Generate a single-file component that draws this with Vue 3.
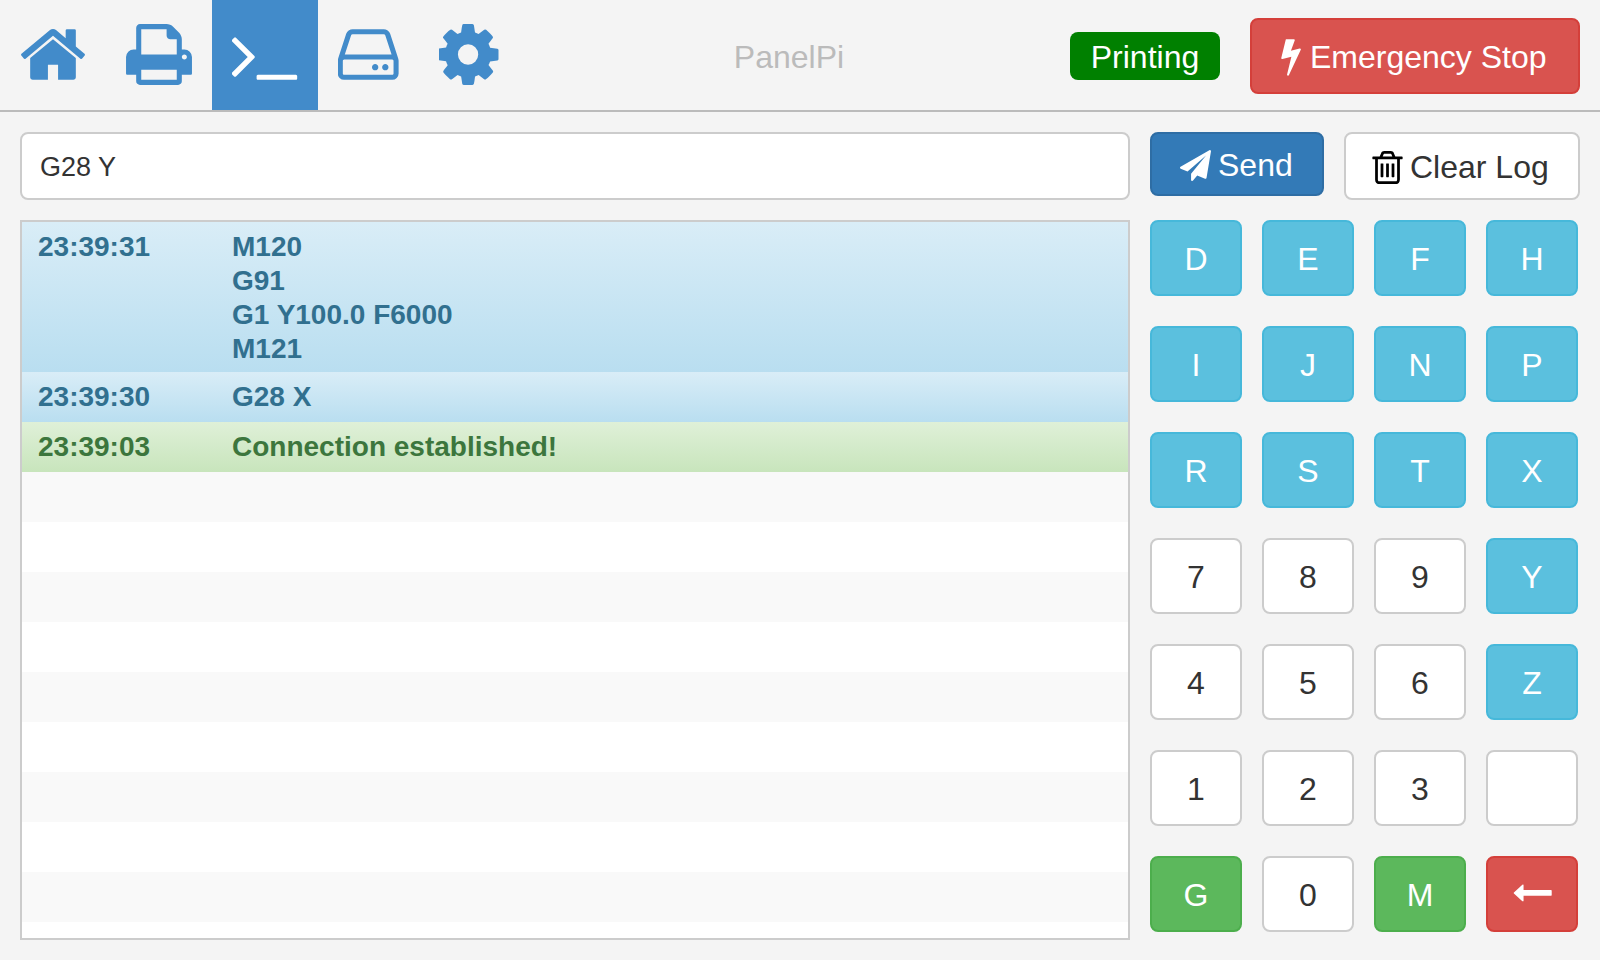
<script setup>
const icons = {
  home: { box: '64 0 1664 1792', d: 'M1472 992v480q0 26-19 45t-45 19h-384v-384h-256v384h-384q-26 0-45-19t-19-45v-480q0-1 .5-3t.5-3l575-474 575 474q1 2 1 6zm223-69l-62 74q-8 9-21 11h-3q-13 0-21-7l-692-577-692 577q-12 8-24 7-13-2-21-11l-62-74q-8-10-7-23.5t11-21.5l719-599q32-26 76-26t76 26l244 204v-195q0-14 9-23t23-9h192q14 0 23 9t9 23v408l219 182q10 8 11 21.5t-7 23.5z' },
  print: { box: '64 0 1664 1792', d: 'M448 1536h896v-256h-896v256zm0-640h896v-384h-160q-40 0-68-28t-28-68v-160h-640v640zm1152 64q0-26-19-45t-45-19-45 19-19 45 19 45 45 19 45-19 19-45zm128 0v416q0 13-9.5 22.5t-22.5 9.5h-224v160q0 40-28 68t-68 28h-960q-40 0-68-28t-28-68v-160h-224q-13 0-22.5-9.5t-9.5-22.5v-416q0-79 56.5-135.5t135.5-56.5h64v-544q0-40 28-68t68-28h672q40 0 88 20t76 48l152 152q28 28 48 76t20 88v256h64q79 0 135.5 56.5t56.5 135.5z' },
  terminal: { box: '20 0 1664 1792', d: 'M585 983l-466 466q-10 10-23 10t-23-10l-50-50q-10-10-10-23t10-23l393-393-393-393q-10-10-10-23t10-23l50-50q10-10 23-10t23 10l466 466q10 10 10 23t-10 23zm1079 457v64q0 14-9 23t-23 9h-960q-14 0-23-9t-9-23v-64q0-14 9-23t23-9h960q14 0 23 9t9 23z' },
  hdd: { box: '24 0 1536 1792', d: 'M1040 1216q0 33-23.5 56.5t-56.5 23.5-56.5-23.5-23.5-56.5 23.5-56.5 56.5-23.5 56.5 23.5 23.5 56.5zm256 0q0 33-23.5 56.5t-56.5 23.5-56.5-23.5-23.5-56.5 23.5-56.5 56.5-23.5 56.5 23.5 23.5 56.5zm128 160v-320q0-13-9.5-22.5t-22.5-9.5h-1216q-13 0-22.5 9.5t-9.5 22.5v320q0 13 9.5 22.5t22.5 9.5h1216q13 0 22.5-9.5t9.5-22.5zm-1230-480h1180l-157-482q-4-13-16-21.5t-26-8.5h-782q-14 0-26 8.5t-16 21.5zm1358 160v320q0 66-47 113t-113 47h-1216q-66 0-113-47t-47-113v-320q0-25 16-75l197-606q17-53 63-86t101-33h782q55 0 101 33t63 86l197 606q16 50 16 75z' },
  cog: { box: '164 0 1536 1792', d: 'M1152 896q0-106-75-181t-181-75-181 75-75 181 75 181 181 75 181-75 75-181zm512-109v222q0 12-8 23t-20 13l-185 28q-19 54-39 91 35 50 107 138 10 12 10 25t-9 23q-27 37-99 108t-94 71q-12 0-26-9l-138-108q-44 23-91 38-16 136-29 186-7 28-36 28h-222q-14 0-24.5-8.5t-11.5-21.5l-28-184q-49-16-90-37l-141 107q-10 9-25 9-14 0-25-11-126-114-165-168-7-10-7-23 0-12 8-23 15-21 51-66.5t54-70.5q-27-50-41-99l-183-27q-13-2-21-12.5t-8-23.5v-222q0-12 8-23t19-13l186-28q14-46 39-92-40-57-107-138-10-12-10-24 0-10 9-23 26-36 98.5-107.5t94.5-71.5q13 0 26 10l138 107q44-23 91-38 16-136 29-186 7-28 36-28h222q14 0 24.5 8.5t11.5 21.5l28 184q49 16 90 37l142-107q9-9 24-9 13 0 25 10 129 119 165 170 7 8 7 22 0 12-8 23-15 21-51 66.5t-54 70.5q26 50 41 98l183 28q13 2 21 12.5t8 23.5z' }
}
const tabs = [
  { id: 'home', w: 66 },
  { id: 'print', w: 66 },
  { id: 'terminal', w: 66, active: true },
  { id: 'hdd', w: 61 },
  { id: 'cog', w: 61 }
]
const bolt = 'M1333 566q18 20 7 44l-540 1157q-13 25-42 25-4 0-14-2-17-5-25.5-19t-4.5-30l197-808-406 101q-4 1-12 1-18 0-31-11-18-15-13-39l201-825q4-14 16-23t28-9h328q19 0 32 12.5t13 29.5q0 8-5 18l-171 463 396-98q8-2 12-2 19 0 34 15z'
const plane = 'M1764 11q33 24 27 64l-256 1536q-5 29-32 45-14 8-31 8-11 0-24-5l-453-185-242 295q-18 23-49 23-13 0-22-4-19-7-30.5-23.5t-11.5-36.5v-349l864-1059-1069 925-395-162q-37-14-40-55-2-40 32-59l1664-960q15-9 32-9 20 0 36 11z'
const trash = 'M704 736v576q0 14-9 23t-23 9h-64q-14 0-23-9t-9-23v-576q0-14 9-23t23-9h64q14 0 23 9t9 23zm256 0v576q0 14-9 23t-23 9h-64q-14 0-23-9t-9-23v-576q0-14 9-23t23-9h64q14 0 23 9t9 23zm256 0v576q0 14-9 23t-23 9h-64q-14 0-23-9t-9-23v-576q0-14 9-23t23-9h64q14 0 23 9t9 23zm128 724v-948h-896v948q0 22 7 40.5t14.5 27 10.5 8.5h832q3 0 10.5-8.5t14.5-27 7-40.5zm-672-1076h448l-48-117q-7-9-17-11h-317q-10 2-17 11zm928 32v64q0 14-9 23t-23 9h-96v948q0 83-47 143.5t-113 60.5h-832q-66 0-113-58.5t-47-141.5v-952h-96q-14 0-23-9t-9-23v-64q0-14 9-23t23-9h309l70-167q15-37 54-63t79-26h320q40 0 79 26t54 63l70 167h309q14 0 23 9t9 23z'
const arrow = 'M1792 800v192q0 14-9 23t-23 9h-1248v224q0 21-19 29t-35-5l-384-350q-10-10-10-23 0-14 10-24l384-354q16-14 35-6 19 9 19 29v224h1248q14 0 23 9t9 23z'

const log = [
  { time: '23:39:31', lines: ['M120', 'G91', 'G1 Y100.0 F6000', 'M121'], kind: 'info' },
  { time: '23:39:30', lines: ['G28 X'], kind: 'info' },
  { time: '23:39:03', lines: ['Connection established!'], kind: 'success' }
]
const blanks = 10
const keys = [
  ['D', 'info'], ['E', 'info'], ['F', 'info'], ['H', 'info'],
  ['I', 'info'], ['J', 'info'], ['N', 'info'], ['P', 'info'],
  ['R', 'info'], ['S', 'info'], ['T', 'info'], ['X', 'info'],
  ['7', 'plain'], ['8', 'plain'], ['9', 'plain'], ['Y', 'info'],
  ['4', 'plain'], ['5', 'plain'], ['6', 'plain'], ['Z', 'info'],
  ['1', 'plain'], ['2', 'plain'], ['3', 'plain'], ['', 'plain'],
  ['G', 'success'], ['0', 'plain'], ['M', 'success'], ['arrow', 'danger']
]
</script>

<template>
  <div class="page">
    <header class="nav">
      <nav class="tabs">
        <a v-for="t in tabs" :key="t.id" class="tab" :class="{ active: t.active }">
          <svg :viewBox="icons[t.id].box" :width="t.w" height="71" fill="currentColor"><path :d="icons[t.id].d" /></svg>
        </a>
      </nav>
      <div class="title">PanelPi</div>
      <span class="badge">Printing</span>
      <button class="btn danger stop">
        <svg viewBox="300 0 1050 1792" class="bolt" fill="currentColor"><path :d="bolt" /></svg>
        Emergency Stop
      </button>
    </header>
    <main class="body">
      <section class="left">
        <input class="cmd" type="text" value="G28 Y" />
        <div class="log">
          <div v-for="(r, i) in log" :key="i" class="row" :class="[r.kind, { multi: r.lines.length > 1 }]">
            <div class="time">{{ r.time }}</div>
            <div class="msg"><div v-for="l in r.lines" :key="l">{{ l }}</div></div>
          </div>
          <div v-for="n in blanks" :key="n" class="row blank" :class="{ odd: n % 2 === 1 }"></div>
        </div>
      </section>
      <section class="right">
        <div class="actions">
          <button class="btn primary send">
            <svg viewBox="0 0 1792 1792" class="plane" fill="currentColor"><path :d="plane" /></svg>
            Send
          </button>
          <button class="btn plain clear">
            <svg viewBox="128 128 1536 1536" class="trash" fill="currentColor"><path :d="trash" /></svg>
            Clear Log
          </button>
        </div>
        <div class="keys">
          <button v-for="(k, i) in keys" :key="i" class="btn key" :class="k[1]">
            <svg v-if="k[0] === 'arrow'" viewBox="0 400 1792 1000" class="arrow" fill="currentColor"><path :d="arrow" /></svg>
            <template v-else>{{ k[0] }}</template>
          </button>
        </div>
      </section>
    </main>
  </div>
</template>

<style>
html, body { margin: 0; background: #f4f4f4; }
</style>

<style scoped>
.page {
  width: 1600px;
  height: 960px;
  background: #f4f4f4;
  font-family: "Liberation Sans", Arial, sans-serif;
  color: #333;
  overflow: hidden;
}
.nav {
  height: 110px;
  border-bottom: 2px solid #bbb;
  display: flex;
  align-items: center;
  padding-right: 20px;
}
.tabs { display: flex; height: 100%; }
.tab {
  display: flex;
  align-items: center;
  padding: 0 20px;
  color: #428bca;
}
.tab svg { display: block; margin-top: -2px; }
.tab.active { background: #428bca; color: #fff; }
.title {
  flex: 1;
  text-align: center;
  font-size: 32px;
  color: #bbb;
  padding-right: 12px;
  margin-top: 4px;
}
.badge {
  background: #008000;
  color: #fff;
  font-size: 32px;
  height: 48px;
  line-height: 50px;
  width: 150px;
  text-align: center;
  border-radius: 8px;
  margin: 2px 30px 0 0;
}
.btn {
  font-family: inherit;
  font-size: 32px;
  border: 2px solid #ccc;
  border-radius: 8px;
  background: #fff;
  color: #333;
  padding: 2px 0 0;
  display: flex;
  align-items: center;
  justify-content: center;
  box-sizing: border-box;
}
.btn.plain { background: #fff; border-color: #ccc; color: #333; }
.btn.info { background: #5bc0de; border-color: #46b8da; color: #fff; }
.btn.success { background: #5cb85c; border-color: #4cae4c; color: #fff; }
.btn.danger { background: #d9534f; border-color: #d43f3a; color: #fff; }
.btn.primary { background: #337ab7; border-color: #2e6da4; color: #fff; }
.stop {
  width: 330px;
  height: 76px;
  margin-top: 2px;
  gap: 9px;
  justify-content: flex-start;
  padding-left: 26px;
}
.bolt { width: 23px; height: 40px; margin-top: -2px; }
.body {
  display: flex;
  gap: 20px;
  padding: 20px;
}
.left {
  width: 1110px;
  display: flex;
  flex-direction: column;
  gap: 20px;
}
.cmd {
  box-sizing: border-box;
  height: 68px;
  padding: 2px 18px 0;
  font-family: inherit;
  font-size: 27px;
  color: #333;
  background: #fff;
  border: 2px solid #ccc;
  border-radius: 8px;
  outline: none;
}
.log {
  box-sizing: border-box;
  height: 720px;
  border: 2px solid #ccc;
  background: #fff;
  overflow: hidden;
}
.row {
  display: flex;
  padding: 8px 16px;
  font-size: 28px;
  line-height: 34px;
  font-weight: 700;
  box-sizing: border-box;
}
.row.multi { padding-bottom: 6px; }
.row.info { background: linear-gradient(#d9edf7, #b9def0); color: #31708f; }
.row.success { background: linear-gradient(#dff0d8, #c8e5bc); color: #3c763d; }
.row.blank { height: 50px; }
.row.blank.odd { background: #f9f9f9; }
.time { width: 194px; }
.right { width: 430px; display: flex; flex-direction: column; gap: 20px; }
.actions { display: flex; gap: 20px; height: 68px; align-items: flex-start; }
.send {
  width: 174px;
  height: 64px;
  gap: 7px;
  justify-content: flex-start;
  padding-left: 28px;
}
.plane { width: 31px; height: 31px; }
.clear {
  width: 236px;
  height: 68px;
  gap: 6px;
  justify-content: flex-start;
  padding-left: 25px;
}
.trash { width: 33px; height: 33px; color: #000; }
.keys {
  display: grid;
  grid-template-columns: repeat(4, 92px);
  grid-auto-rows: 76px;
  column-gap: 20px;
  row-gap: 30px;
}
.arrow { width: 40px; height: 22px; margin-top: -4px; }
</style>
